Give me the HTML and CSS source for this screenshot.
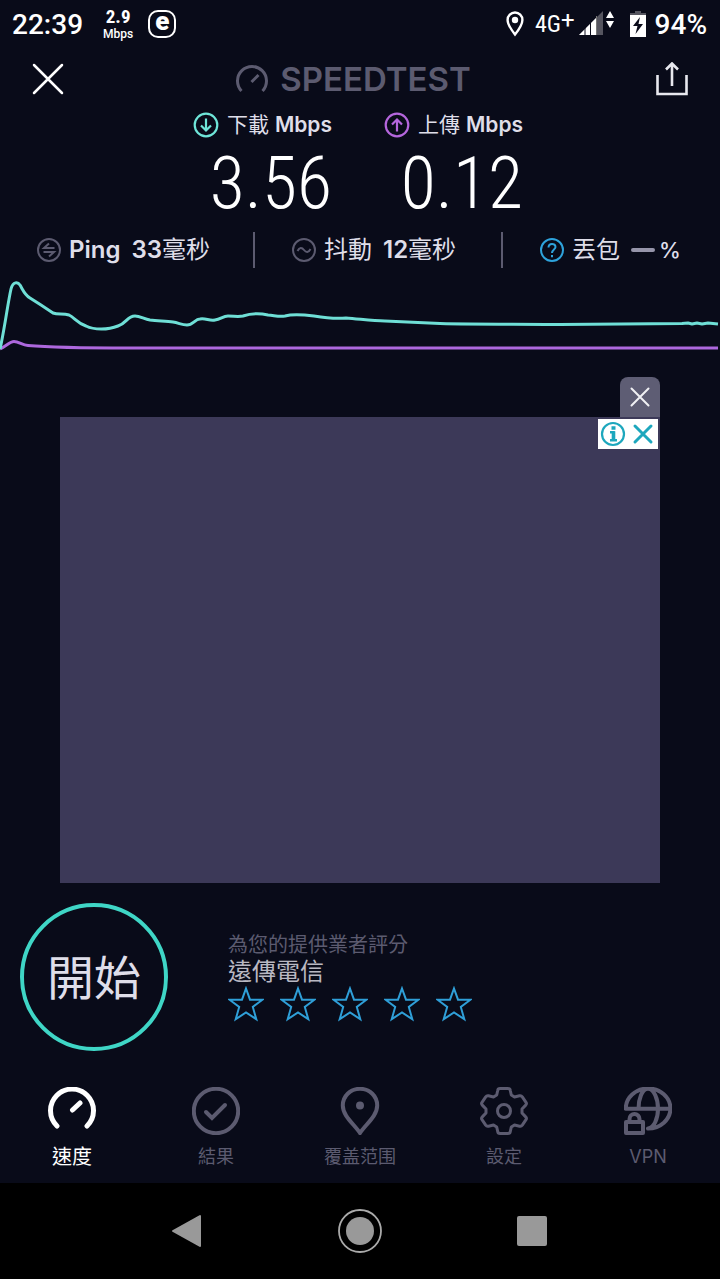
FILE: index.html
```html
<!DOCTYPE html>
<html lang="zh-Hant">

<head>
    <meta charset="utf-8">
    <meta name="viewport" content="width=device-width, initial-scale=1">
    <link rel="stylesheet" href="styles.css">
    <title>Speedtest</title>
</head>

<body>
    <div class="status">
        <span class="clock">22:39</span>
        <span class="rate"><b>2.9</b><small>Mbps</small></span>
        <span class="badge">e</span>
        <span class="spacer"></span>
        <svg class="pin" width="18" height="26" viewBox="0 0 18 26">
            <path d="M9 1.500a7.400 7.400 0 0 0-7.400 7.400C1.600 14 9 23.500 9 23.500S16.400 14 16.400 8.900A7.400 7.400 0 0 0 9 1.500z" fill="none" stroke="#fff" stroke-width="2.400" />
            <circle cx="9" cy="9" r="3.200" fill="#fff" />
        </svg>
        <span class="network">4G<sup>+</sup></span>
        <svg class="signal" width="36" height="26" viewBox="0 0 36 26">
            <path d="M0 24L24 0v24z" fill="#55555f" />
            <path d="M0 24L18 6v18z" fill="#fff" />
            <path d="M6 16v8M11.500 10v14" stroke="#0a0b1a" stroke-width="1" />
            <path d="M17.500 5v19" stroke="#777" stroke-width="1" />
            <path d="M31 0l4 7h-8zM31 17l4-7h-8z" fill="#fff" />
        </svg>
        <svg class="battery" width="16" height="28" viewBox="0 0 16 28">
            <path d="M5 1h6v2h5v4H0V3h5z" fill="#55555f" />
            <path d="M0 5h16v22H0z" fill="#fff" />
            <path d="M10 7L3 16h4.500L5.500 24 13 14H8.500z" fill="#0a0b1a" />
        </svg>
        <span class="percent">94%</span>
    </div>

    <header class="header">
        <button class="icon-button" aria-label="關閉">
            <svg width="32" height="32" viewBox="0 0 32 32">
                <path d="M2 2l28 28M30 2L2 30" stroke="#fff" stroke-width="2.500" stroke-linecap="round" />
            </svg>
        </button>
        <h1 class="logo">
            <svg width="34" height="30" viewBox="0 0 34 30">
                <path d="M6.500 27A14.500 14.500 0 1 1 27.500 27M16.500 18L23.500 11" fill="none" stroke="#5c5b70" stroke-width="3" />
            </svg>
            SPEEDTEST
        </h1>
        <button class="icon-button" aria-label="分享">
            <svg width="32" height="34" viewBox="0 0 32 34">
                <path d="M1.500 13v19h29V13M16 24V2M10 7.500L16 1.500L22 7.500" fill="none" stroke="#e8e8ee" stroke-width="2.600" />
            </svg>
        </button>
    </header>

    <main>
        <section class="speeds">
            <div class="speed">
                <h2>
                    <svg width="26" height="26" viewBox="0 0 26 26" fill="none" stroke="#6fe6d9" stroke-width="2.200">
                        <circle cx="13" cy="13" r="11.300" />
                        <path d="M13 6.500v12M8 13.500l5 5 5-5" />
                    </svg>
                    <span>下載 <b>Mbps</b></span>
                </h2>
                <p>3.56</p>
            </div>
            <div class="speed">
                <h2>
                    <svg width="26" height="26" viewBox="0 0 26 26" fill="none" stroke="#b566dd" stroke-width="2.200">
                        <circle cx="13" cy="13" r="11.300" />
                        <path d="M13 19.500v-12M8 12.500l5-5 5 5" />
                    </svg>
                    <span>上傳 <b>Mbps</b></span>
                </h2>
                <p>0.12</p>
            </div>
        </section>

        <section class="stats">
            <div class="stat">
                <svg width="24" height="24" viewBox="0 0 24 24" fill="none" stroke="#5c5b70" stroke-width="2">
                    <circle cx="12" cy="12" r="11" />
                    <path d="M17.500 10H7l5-4.500M6.500 14H17l-5 4.500" />
                </svg>
                <span><b>Ping</b></span>
                <span><b>33</b>毫秒</span>
            </div>
            <div class="stat">
                <svg width="24" height="24" viewBox="0 0 24 24" fill="none" stroke="#5c5b70" stroke-width="2">
                    <circle cx="12" cy="12" r="11" />
                    <path d="M5.500 13c2-4 4.500-3.500 6.500-1s4.500 3 6.500-1" />
                </svg>
                <span>抖動</span>
                <span><b>12</b>毫秒</span>
            </div>
            <div class="stat">
                <svg width="24" height="24" viewBox="0 0 24 24" fill="none" stroke="#2ea3dc" stroke-width="2">
                    <circle cx="12" cy="12" r="11" />
                    <path d="M8.500 9.500C8.500 4.800 15.500 4.800 15.500 9C15.500 11.500 12 11.500 12 15M12 17v2.200" />
                </svg>
                <span>丟包</span>
                <span class="loss"><i class="dash"></i>%</span>
            </div>
        </section>

        <svg class="chart" viewBox="0 0 720 90" preserveAspectRatio="none" fill="none" stroke-width="3" stroke-linejoin="round">
            <path stroke="#ad68dd" d="M0 79C6 76 10 71.500 14 71.500C19 71.500 22 75 28 75.500C50 77.500 90 78 130 78H718" />
            <path stroke="#6fdfd6" d="M0 79C4 62 8 32 11 19C13 11 18 12 20 15C24 22 25 25 30 28L41 35L53 43C58 45 63 43 69 45C75 48 77 53 86 56C94 60 108 60 118 56C127 53 127 46 135 46C140 46 144 49 150 50C158 51 166 51 173 52C179 53 182 55 187 55C193 55 195 49 200 49C206 48 209 51 215 50C221 49 223 46 228 46C234 46 238 47 243 46C252 43 259 43 268 45C277 46 280 47 285 46C292 44 306 45 314 46C326 48 336 49 346 48C360 49 372 51 385 51L440 53.500C480 54.500 520 54 560 54.500C600 54.500 640 53.500 682 53.500L688 53L692 54L697 53L702 54L708 53L718 54" />
        </svg>

        <section class="ad">
            <button class="ad-close" aria-label="關閉廣告">
                <svg width="20" height="20" viewBox="0 0 20 20">
                    <path d="M1.500 1.500l17 17M18.500 1.500l-17 17" stroke="#f0f0f4" stroke-width="2" stroke-linecap="round" />
                </svg>
            </button>
            <div class="ad-body">
                <div class="ad-choices">
                    <svg width="60" height="30" viewBox="0 0 60 30" fill="none" stroke="#1da7bd" stroke-width="2.200">
                        <circle cx="15" cy="15" r="11" />
                        <path d="M12 13.200H15.500v8M12 21.200h7" stroke-width="2.400" />
                        <path d="M15.500 12.200v9M13.500 9h4" stroke-width="3.600" />
                        <path d="M37 7l16 16M53 7L37 23" stroke-width="3" stroke-linecap="round" />
                    </svg>
                </div>
            </div>
        </section>

        <section class="actions">
            <button class="start">開始</button>
            <div class="rating">
                <p class="hint">為您的提供業者評分</p>
                <p class="provider">遠傳電信</p>
                <div class="stars">
                    <button aria-label="1"><svg class="star" viewBox="0 0 36 36"><use href="#star" /></svg></button>
                    <button aria-label="2"><svg class="star" viewBox="0 0 36 36"><use href="#star" /></svg></button>
                    <button aria-label="3"><svg class="star" viewBox="0 0 36 36"><use href="#star" /></svg></button>
                    <button aria-label="4"><svg class="star" viewBox="0 0 36 36"><use href="#star" /></svg></button>
                    <button aria-label="5"><svg class="star" viewBox="0 0 36 36"><use href="#star" /></svg></button>
                </div>
            </div>
        </section>
    </main>

    <nav class="tabs">
        <a href="#speed" class="tab active">
            <svg viewBox="0 0 48 48">
                <path d="M9 39A21.500 21.500 0 1 1 39 39M24.500 23L32 16" stroke-width="5" />
            </svg>
            <span>速度</span>
        </a>
        <a href="#results" class="tab">
            <svg viewBox="0 0 48 48">
                <circle cx="24" cy="24" r="22.200" />
                <path d="M14 25l6 6L33 18" />
            </svg>
            <span>結果</span>
        </a>
        <a href="#coverage" class="tab">
            <svg viewBox="0 0 48 48">
                <path d="M24 1.800C14 1.800 6.800 9.500 6.800 18.500C6.800 29 18 37 24 46C30 37 41.200 29 41.200 18.500C41.200 9.500 34 1.800 24 1.800z" />
                <circle cx="24" cy="18.500" r="2" />
            </svg>
            <span>覆盖范围</span>
        </a>
        <a href="#settings" class="tab">
            <svg viewBox="0 0 48 48" stroke-linejoin="round">
                <path class="thin" d="M20 1.500h8q2 0 2.300 2l1 4.500 3.200 2 5-1.200q1.800-.4 2.800 1l3.700 5.500q1 1.500-.3 2.800L42 22v4l3.700 3.900q1.300 1.300.3 2.800l-3.700 5.500q-1 1.400-2.800 1l-5-1.200-3.200 2-1 4.500q-.3 2-2.300 2h-8q-2 0-2.300-2l-1-4.500-3.200-2-5 1.200q-1.800.4-2.800-1L2 32.700q-1-1.500.3-2.800L6 26v-4l-3.700-3.900Q1 16.800 2 15.300l3.700-5.500q1-1.400 2.800-1l5 1.200 3.200-2 1-4.500q.3-2 2.300-2z" />
                <circle class="thin" cx="24" cy="24" r="6.500" />
            </svg>
            <span>設定</span>
        </a>
        <a href="#vpn" class="tab">
            <svg viewBox="0 0 48 48">
                <path d="M1.800 21.800A22.300 20 0 1 1 24 41.500M1.800 21.800h44.400M14.500 21.800C14.500 12 18 1.800 24 1.800S34 12 34 21.800S30 41 24 41.500" />
                <path d="M2 35h17v11H2zM5.500 35v-3a5 5 0 0 1 10 0v3" stroke-linejoin="round" />
            </svg>
            <span>VPN</span>
        </a>
    </nav>

    <div class="system">
        <button aria-label="返回">
            <svg width="44" height="44" viewBox="0 0 44 44">
                <path d="M7 22L34 7v30z" fill="#999" stroke="#999" stroke-width="2" stroke-linejoin="round" />
            </svg>
        </button>
        <button aria-label="主畫面">
            <svg width="44" height="44" viewBox="0 0 44 44">
                <circle cx="22" cy="22" r="21" fill="none" stroke="#aaa" stroke-width="1.800" />
                <circle cx="22" cy="22" r="14" fill="#999" />
            </svg>
        </button>
        <button aria-label="最近使用">
            <svg width="44" height="44" viewBox="0 0 44 44">
                <rect x="7" y="7" width="30" height="30" rx="2" fill="#999" />
            </svg>
        </button>
    </div>

    <svg class="symbols">
        <symbol id="star" viewBox="0 0 36 36">
            <path d="M18 2.500l4 11.200H34.500L24.800 21l3.500 12.200L18 26.500 7.700 33.200 11.200 21 1.500 13.700H14z" fill="none" stroke="#2f9fd8" stroke-width="2" />
        </symbol>
    </svg>
</body>

</html>
```

FILE: styles.css
```css
* {
    box-sizing: border-box;
}

body {
    margin: 0;
    min-height: 100vh;
    display: flex;
    flex-direction: column;
    background-color: #090b19;
    color: #dfdee9;
    font-family: Inter, "Noto Sans CJK TC", sans-serif;
}

h1, h2, p {
    margin: 0;
}

button {
    padding: 0;
    border: 0;
    background: none;
    color: inherit;
    font-family: inherit;
    cursor: pointer;
}

svg {
    display: block;
    flex: none;
}

main {
    flex: 1;
}

.symbols {
    position: absolute;
    width: 0;
    height: 0;
}

/* status bar */
.status {
    height: 48px;
    padding: 0 13px 0 12px;
    display: flex;
    align-items: center;
    color: #fff;
    font-family: Roboto, sans-serif;
}

.clock, .percent {
    font-size: 28px;
    font-weight: 500;
}

.rate {
    margin: 0 15px 0 20px;
    display: flex;
    flex-direction: column;
    align-items: center;
    font-family: "Roboto Condensed", Roboto, sans-serif;
    font-size: 19px;
    line-height: 20px;
}

.rate small {
    font-family: Roboto, sans-serif;
    font-size: 12px;
    font-weight: 500;
    line-height: 14px;
}

.badge {
    width: 28px;
    height: 28px;
    border: 2px solid #fff;
    border-radius: 10px;
    text-align: center;
    font-size: 26px;
    font-weight: 900;
    line-height: 18px;
}

.spacer {
    flex: 1;
}

.network {
    margin: 0 4px 0 11px;
    font-family: "Roboto Condensed", Roboto, sans-serif;
    font-size: 24px;
    line-height: 28px;
}

.network sup {
    font-family: Roboto, sans-serif;
    font-size: 24px;
    line-height: 0;
    vertical-align: 4px;
}

.battery {
    margin: 0 9px 0 15px;
}

/* header */
.header {
    height: 62px;
    padding: 0 32px;
    display: flex;
    align-items: center;
    justify-content: space-between;
}

.logo {
    padding-right: 14px;
    display: flex;
    align-items: center;
    gap: 11px;
    color: #5c5b70;
    font-size: 33px;
    font-weight: 600;
}

/* download and upload */
.speeds {
    display: flex;
    justify-content: center;
    gap: 52px;
    padding-right: 4px;
}

.speed h2 {
    height: 30px;
    display: flex;
    align-items: center;
    gap: 8px;
    font-size: 21px;
    line-height: 26px;
    font-weight: 400;
    white-space: nowrap;
}

.speed b {
    font-weight: 600;
}

.speed p {
    height: 88px;
    color: #fff;
    font-family: "Roboto Condensed", "Liberation Sans Narrow", Roboto, sans-serif;
    font-size: 72px;
    font-weight: 300;
    line-height: 88px;
    text-align: right;
}

/* ping, jitter, loss */
.stats {
    height: 42px;
    padding-bottom: 2px;
    display: grid;
    grid-template-columns: 253fr 248fr 219fr;
    align-items: end;
}

.stat {
    height: 36px;
    padding-left: 37px;
    display: flex;
    align-items: center;
    font-size: 24px;
    line-height: 28px;
    white-space: nowrap;
}

.stat b {
    font-weight: 600;
}

.stat + .stat {
    border-left: 2px solid #5c5b70;
}

.stat svg {
    margin-right: 8px;
}

.stat span + span {
    margin-left: 11px;
}

.loss {
    display: flex;
    align-items: center;
    gap: 4px;
    font-size: 22px;
    font-weight: 500;
}

.dash {
    width: 24px;
    height: 4px;
    border-radius: 2px;
    background-color: #9695aa;
}

.chart {
    width: 100%;
    height: 90px;
}

/* ad */
.ad {
    margin: 17px 60px 0;
    display: flex;
    flex-direction: column;
    align-items: flex-end;
}

.ad-close {
    width: 40px;
    height: 40px;
    display: grid;
    place-items: center;
    border-radius: 8px 8px 0 0;
    background-color: #5e5d74;
}

.ad-body {
    width: 100%;
    height: 466px;
    padding: 2px;
    display: flex;
    justify-content: flex-end;
    align-items: flex-start;
    background-color: #3c3958;
}

.ad-choices {
    background-color: #fff;
}

/* start and rating */
.actions {
    padding: 20px 20px 0;
    display: flex;
    align-items: center;
    gap: 60px;
}

.start {
    width: 148px;
    height: 148px;
    padding-bottom: 6px;
    border: 4px solid #3fd6c6;
    border-radius: 50%;
    font-size: 47px;
}

.hint {
    color: #5c5b70;
    font-size: 20px;
    line-height: 26px;
}

.provider {
    color: #b9b8c2;
    font-size: 24px;
    line-height: 28px;
}

.stars {
    display: flex;
    gap: 16px;
}

.star {
    width: 36px;
    height: 36px;
}

/* tabs */
.tabs {
    padding: 35px 0 14px;
    display: grid;
    grid-template-columns: repeat(5, 1fr);
}

.tab {
    display: flex;
    flex-direction: column;
    align-items: center;
    gap: 10px;
    color: #5c5b70;
    font-size: 18px;
    line-height: 24px;
    text-decoration: none;
}

.tab svg {
    width: 48px;
    height: 48px;
    fill: none;
    stroke: currentColor;
    stroke-width: 4;
    stroke-linecap: round;
}

.tab .thin {
    stroke-width: 3;
}

.tab.active {
    color: #fff;
    font-size: 20px;
}

/* system buttons */
.system {
    height: 96px;
    display: flex;
    align-items: center;
    justify-content: center;
    gap: 128px;
    background-color: #000;
}
```
